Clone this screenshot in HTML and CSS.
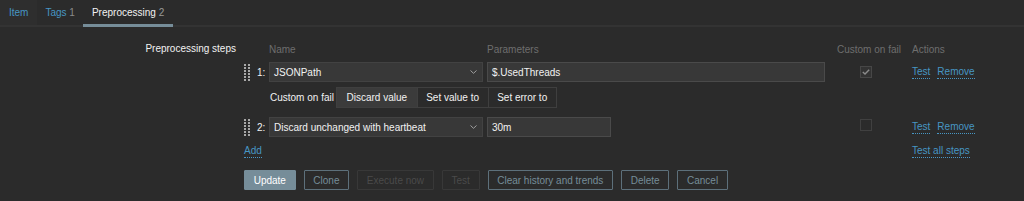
FILE: index.html
```html
<!DOCTYPE html>
<html>
<head>
<meta charset="utf-8">
<link rel="stylesheet" href="styles.css">
</head>
<body>
<div class="tabs">
  <a class="tab tab-first">Item</a>
  <a class="tab">Tags <span class="count">1</span></a>
  <a class="tab tab-active">Preprocessing <span class="count">2</span></a>
</div>
<div class="form">
  <div class="form-label">Preprocessing steps</div>
  <div class="form-field">
    <div class="row head">
      <div class="c-handle"></div>
      <div class="c-num"></div>
      <div class="c-name">Name</div>
      <div class="c-params">Parameters</div>
      <div class="c-cof head-cof">Custom on fail</div>
      <div class="c-actions">Actions</div>
    </div>

    <div class="row step step1">
      <div class="c-handle">
        <svg class="drag" width="7" height="17" viewBox="0 0 7 17">
          <g fill="#a8a8a8">
            <rect x="0" y="0" width="2" height="2"/><rect x="4" y="0" width="2" height="2"/>
            <rect x="0" y="3" width="2" height="2"/><rect x="4" y="3" width="2" height="2"/>
            <rect x="0" y="6" width="2" height="2"/><rect x="4" y="6" width="2" height="2"/>
            <rect x="0" y="9" width="2" height="2"/><rect x="4" y="9" width="2" height="2"/>
            <rect x="0" y="12" width="2" height="2"/><rect x="4" y="12" width="2" height="2"/>
            <rect x="0" y="15" width="2" height="2"/><rect x="4" y="15" width="2" height="2"/>
          </g>
        </svg>
      </div>
      <div class="c-num">1:</div>
      <div class="c-name">
        <div class="select"><span>JSONPath</span>
          <svg width="7" height="4" viewBox="0 0 7 4"><path d="M0.5 0.5 L3.5 3.3 L6.5 0.5" fill="none" stroke="#a0a0a0" stroke-width="1"/></svg>
        </div>
      </div>
      <div class="c-params"><div class="input input-wide">$.UsedThreads</div></div>
      <div class="c-cof"><span class="checkbox checked">
        <svg width="8" height="6" viewBox="0 0 8 6"><path d="M0.8 3 L3 5 L7.2 0.8" fill="none" stroke="#8c8c8c" stroke-width="1.4"/></svg>
      </span></div>
      <div class="c-actions"><a class="link">Test</a><a class="link">Remove</a></div>
    </div>

    <div class="row cof-row">
      <div class="c-handle"></div>
      <div class="c-num"></div>
      <div class="cof-inner">
        <span class="cof-label">Custom on fail</span>
        <div class="radio-group">
          <span class="radio selected">Discard value</span>
          <span class="radio">Set value to</span>
          <span class="radio">Set error to</span>
        </div>
      </div>
    </div>

    <div class="row step step2">
      <div class="c-handle">
        <svg class="drag" width="7" height="17" viewBox="0 0 7 17">
          <g fill="#a8a8a8">
            <rect x="0" y="0" width="2" height="2"/><rect x="4" y="0" width="2" height="2"/>
            <rect x="0" y="3" width="2" height="2"/><rect x="4" y="3" width="2" height="2"/>
            <rect x="0" y="6" width="2" height="2"/><rect x="4" y="6" width="2" height="2"/>
            <rect x="0" y="9" width="2" height="2"/><rect x="4" y="9" width="2" height="2"/>
            <rect x="0" y="12" width="2" height="2"/><rect x="4" y="12" width="2" height="2"/>
            <rect x="0" y="15" width="2" height="2"/><rect x="4" y="15" width="2" height="2"/>
          </g>
        </svg>
      </div>
      <div class="c-num">2:</div>
      <div class="c-name">
        <div class="select"><span>Discard unchanged with heartbeat</span>
          <svg width="7" height="4" viewBox="0 0 7 4"><path d="M0.5 0.5 L3.5 3.3 L6.5 0.5" fill="none" stroke="#a0a0a0" stroke-width="1"/></svg>
        </div>
      </div>
      <div class="c-params"><div class="input input-short">30m</div></div>
      <div class="c-cof"><span class="checkbox"></span></div>
      <div class="c-actions"><a class="link">Test</a><a class="link">Remove</a></div>
    </div>

    <div class="row add-row">
      <div class="add-cell"><a class="link">Add</a></div>
      <div class="c-actions"><a class="link">Test all steps</a></div>
    </div>

    <div class="buttons">
      <button class="btn btn-main">Update</button>
      <button class="btn btn-alt">Clone</button>
      <button class="btn btn-disabled">Execute now</button>
      <button class="btn btn-disabled">Test</button>
      <button class="btn btn-alt">Clear history and trends</button>
      <button class="btn btn-alt">Delete</button>
      <button class="btn btn-alt">Cancel</button>
    </div>
  </div>
</div>
</body>
</html>
```

FILE: styles.css
```css
html, body {
  margin: 0;
  padding: 0;
  background: #2b2b2b;
}
body {
  font-family: "Liberation Sans", Arial, sans-serif;
  font-size: 10px;
  color: #f2f2f2;
  width: 1024px;
  height: 201px;
  overflow: hidden;
}
.tabs {
  display: flex;
  height: 27px;
  box-shadow: inset 0 -2px 0 #333333;
}
.tab {
  display: flex;
  align-items: center;
  height: 25px;
  padding: 0 8.5px;
  color: #4796c4;
  white-space: pre;
}
.tab-first {
  background: #2e2e2e;
  padding-left: 9px;
}
.tab .count {
  color: #8a8a8a;
}
.tab-active {
  height: 27px;
  padding-bottom: 2px;
  box-sizing: border-box;
  color: #f2f2f2;
  box-shadow: inset 0 -3px 0 #768d99;
}
.tab-active .count {
  color: #999999;
}
.form {
  display: flex;
  padding-top: 15px;
}
.form-label {
  width: 236px;
  text-align: right;
  line-height: 14px;
  color: #f2f2f2;
}
.form-field {
  margin-left: 8px;
}
.row {
  display: flex;
  align-items: center;
}
.head {
  height: 14px;
  color: #6e6e6e;
}
.c-handle {
  width: 13px;
  display: flex;
  align-items: center;
}
.c-num {
  width: 12px;
  color: #f2f2f2;
}
.c-name {
  width: 214px;
}
.c-params {
  width: 338px;
  margin-left: 4px;
}
.c-cof {
  width: 87px;
  display: flex;
  padding-left: 35px;
  box-sizing: border-box;
}
.head-cof {
  padding-left: 12px;
  white-space: nowrap;
}
.c-actions {
  display: flex;
  gap: 7px;
}
.step {
  height: 20px;
}
.step1 {
  margin-top: 6px;
}
.step2 {
  margin-top: 9px;
}
.select {
  height: 20px;
  box-sizing: border-box;
  border: 1px solid #424242;
  background: #383838;
  display: flex;
  align-items: center;
  justify-content: space-between;
  padding: 0 5px 0 4px;
  color: #f2f2f2;
}
.select svg {
  display: block;
}
.input {
  height: 20px;
  box-sizing: border-box;
  border: 1px solid #4a4a4a;
  background: #383838;
  display: flex;
  align-items: center;
  padding: 0 4px;
  color: #f2f2f2;
}
.input-wide {
  width: 338px;
}
.input-short {
  width: 124px;
}
.checkbox {
  width: 12px;
  height: 12px;
  box-sizing: border-box;
  border: 1px solid #404040;
  display: flex;
  align-items: center;
  justify-content: center;
}
.checkbox.checked {
  background: #333333;
  border-color: #474747;
}
.checkbox svg {
  display: block;
}
.step2 .checkbox {
  margin-top: -5px;
}
.link {
  color: #4796c4;
  border-bottom: 1px dotted #4796c4;
  line-height: 12px;
}
.cof-row {
  margin-top: 5px;
  height: 21px;
}
.cof-inner {
  display: flex;
  align-items: center;
  padding-left: 1px;
}
.cof-label {
  width: 66px;
  color: #f2f2f2;
}
.radio-group {
  display: flex;
  height: 21px;
  box-sizing: border-box;
  border: 1px solid #3f3f3f;
}
.radio {
  display: flex;
  align-items: center;
  padding: 0 8.6px;
  color: #f2f2f2;
  border-left: 1px solid #3f3f3f;
}
.radio:first-child {
  border-left: none;
  padding: 0 9.5px;
}
.radio.selected {
  background: #3b3b3b;
}
.add-row {
  margin-top: 7px;
  height: 14px;
}
.add-cell {
  width: 668px;
  display: flex;
}
.buttons {
  display: flex;
  gap: 8px;
  margin-top: 12px;
}
.btn {
  height: 20px;
  box-sizing: border-box;
  padding: 0 8.7px;
  font-family: "Liberation Sans", Arial, sans-serif;
  font-size: 10px;
  background: transparent;
  border: 1px solid #5d707b;
  color: #768d99;
  margin: 0;
  border-radius: 1px;
}
.btn-main {
  background: #768d99;
  border-color: #768d99;
  color: #ffffff;
}
.btn-disabled {
  border-color: #383838;
  color: #4a4a4a;
}
```
